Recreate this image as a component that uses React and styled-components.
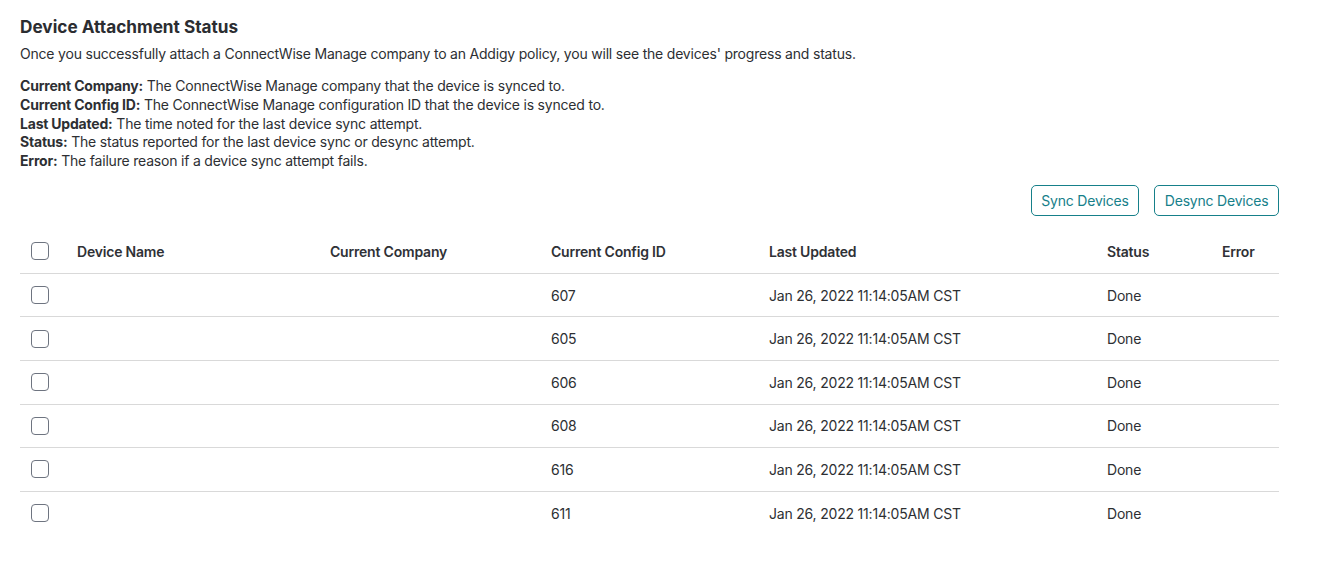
import React from 'react';
import styled, { createGlobalStyle } from 'styled-components';

const GlobalStyle = createGlobalStyle`
  body {
    margin: 0;
    background: #ffffff;
    font-family: Inter, "Noto Sans", sans-serif;
    color: #2d2f33;
    letter-spacing: -0.2px;
  }
`;

const Page = styled.div`
  padding: 16px 38px 0 20px;
`;
const Title = styled.h2`
  margin: 0;
  font-size: 17.2px;
  line-height: 22px;
  font-weight: 700;
  letter-spacing: 0;
  color: #2b2d31;
`;
const Intro = styled.p`
  margin: 6px 0 0;
  font-size: 14px;
  line-height: 19px;
`;
const Definitions = styled.div`
  margin-top: 14px;
  font-size: 14px;
  line-height: 18.75px;
`;
const Term = styled.strong`
  font-weight: 700;
`;
const Toolbar = styled.div`
  display: flex;
  justify-content: flex-end;
  gap: 15px;
  margin-top: 14px;
`;
const OutlineButton = styled.button`
  height: 31px;
  padding: 0 9.5px;
  border: 1px solid #16808a;
  border-radius: 5px;
  background: #fff;
  color: #16808a;
  font-family: inherit;
  font-size: 14px;
  letter-spacing: -0.2px;
  cursor: pointer;
`;
const Table = styled.table`
  width: 100%;
  margin-top: 14px;
  border-collapse: collapse;
  table-layout: fixed;
  font-size: 14px;
`;
const Head = styled.th`
  width: ${p => p.w}px;
  height: 43px;
  padding: 0;
  text-align: left;
  font-weight: 600;
  color: #2f3136;
  border-bottom: 1px solid #d9d9d9;
`;
const Row = styled.tr`
  & + & td {
    border-top: 1px solid #d9d9d9;
  }
`;
const Cell = styled.td`
  height: 43.6px;
  box-sizing: border-box;
  padding: 0;
`;
const Box = styled.input.attrs({ type: 'checkbox' })`
  appearance: none;
  display: block;
  width: 18px;
  height: 18px;
  margin: 0 0 0 11px;
  border: 1.3px solid #6e7480;
  border-radius: 4px;
  background: #fff;
  box-sizing: border-box;
`;

const columns = [
  { label: '', w: 57 },
  { label: 'Device Name', w: 253 },
  { label: 'Current Company', w: 221 },
  { label: 'Current Config ID', w: 218 },
  { label: 'Last Updated', w: 338 },
  { label: 'Status', w: 115 },
  { label: 'Error', w: 57 },
];

const devices = ['607', '605', '606', '608', '616', '611'];

export default function App() {
  return (
    <Page>
      <GlobalStyle />
      <Title>Device Attachment Status</Title>
      <Intro>
        Once you successfully attach a ConnectWise Manage company to an Addigy policy, you will see the devices' progress and status.
      </Intro>
      <Definitions>
        <div><Term>Current Company:</Term> The ConnectWise Manage company that the device is synced to.</div>
        <div><Term>Current Config ID:</Term> The ConnectWise Manage configuration ID that the device is synced to.</div>
        <div><Term>Last Updated:</Term> The time noted for the last device sync attempt.</div>
        <div><Term>Status:</Term> The status reported for the last device sync or desync attempt.</div>
        <div><Term>Error:</Term> The failure reason if a device sync attempt fails.</div>
      </Definitions>
      <Toolbar>
        <OutlineButton>Sync Devices</OutlineButton>
        <OutlineButton>Desync Devices</OutlineButton>
      </Toolbar>
      <Table>
        <thead>
          <tr>
            {columns.map((c, i) => (
              <Head key={i} w={c.w}>{i === 0 ? <Box /> : c.label}</Head>
            ))}
          </tr>
        </thead>
        <tbody>
          {devices.map(id => (
            <Row key={id}>
              <Cell><Box /></Cell>
              <Cell />
              <Cell />
              <Cell>{id}</Cell>
              <Cell>Jan 26, 2022 11:14:05AM CST</Cell>
              <Cell>Done</Cell>
              <Cell />
            </Row>
          ))}
        </tbody>
      </Table>
    </Page>
  );
}
